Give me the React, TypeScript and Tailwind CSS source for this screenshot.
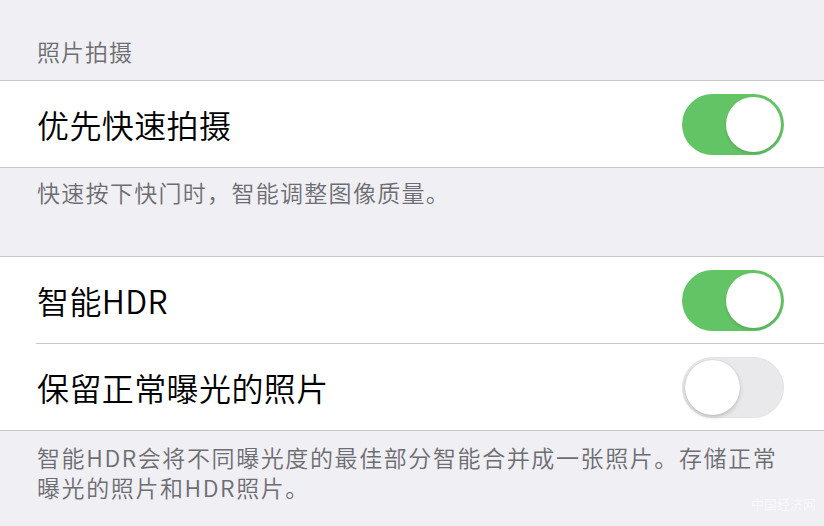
import React from "react";

function Toggle({ on }: { on: boolean }) {
  return on ? (
    <div className="flex h-[61px] w-[102px] shrink-0 items-center justify-end rounded-full bg-[#63c466] p-[3px]">
      <div className="h-[55px] w-[55px] rounded-full bg-white shadow-[0_2px_3px_rgba(0,0,0,0.12)]" />
    </div>
  ) : (
    <div className="flex h-[61px] w-[102px] shrink-0 items-center justify-start rounded-full border border-[#e3e3e5] bg-[#e9e9eb] p-[2px]">
      <div className="h-[55px] w-[55px] rounded-full bg-white shadow-[0_2px_4px_rgba(0,0,0,0.18),0_0_1px_rgba(0,0,0,0.2)]" />
    </div>
  );
}

function Row({ label, on }: { label: string; on: boolean }) {
  return (
    <div className="flex h-[86px] shrink-0 items-center justify-between bg-white pl-[37px] pr-[40px]">
      <span className="text-[32px] font-[350] leading-none tracking-[0.4px] text-black">{label}</span>
      <Toggle on={on} />
    </div>
  );
}

export default function App() {
  return (
    <div
      className="relative flex h-[526px] w-[824px] flex-col overflow-hidden bg-[#efeff4]"
      style={{ fontFamily: '"Noto Sans CJK SC", "Noto Sans", sans-serif' }}
    >
      <div className="flex h-[80px] shrink-0 items-end pb-[17px] pl-[37px] text-[23px] font-[350] leading-none tracking-[1px] text-[#6d6d72]">
        照片拍摄
      </div>
      <div className="shrink-0 border-y border-[#c8c7cc]">
        <Row label="优先快速拍摄" on={true} />
      </div>
      <div className="h-[88px] shrink-0 pl-[37px] pt-[9px] text-[23px] font-[350] leading-[30px] tracking-[1.3px] text-[#6d6d72]">
        快速按下快门时，智能调整图像质量。
      </div>
      <div className="flex shrink-0 flex-col border-y border-[#c8c7cc] bg-white">
        <Row label="智能HDR" on={true} />
        <div className="ml-[36px] h-px shrink-0 bg-[#c8c7cc]" />
        <Row label="保留正常曝光的照片" on={false} />
      </div>
      <div className="flex flex-col whitespace-nowrap pl-[37px] pt-[11px] text-[23px] font-[350] leading-[30px] tracking-[1.6px] text-[#6d6d72]">
        <span>智能HDR会将不同曝光度的最佳部分智能合并成一张照片。存储正常</span>
        <span>曝光的照片和HDR照片。</span>
      </div>
      <div className="absolute bottom-[16px] right-[8px] text-[13px] leading-none text-white opacity-60">中国经济网</div>
    </div>
  );
}
